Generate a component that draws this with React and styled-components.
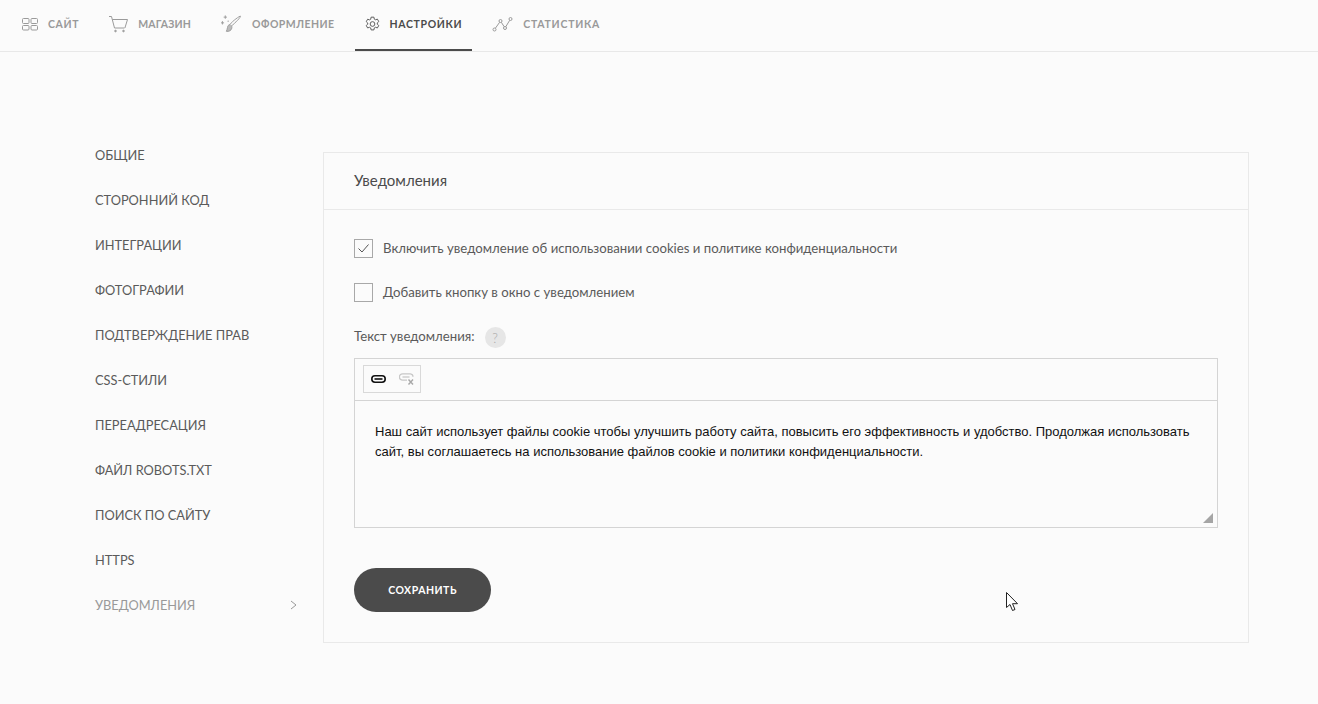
import React from 'react';
import styled, { createGlobalStyle } from 'styled-components';

const GlobalStyle = createGlobalStyle`
  html, body {
    margin: 0;
    padding: 0;
    background: #fbfbfb;
    font-family: 'Lato', 'Open Sans', 'Liberation Sans', sans-serif;
  }
  * {
    box-sizing: border-box;
  }
`;

const GridIcon = () => (
  <svg width="16" height="13" viewBox="0 0 16 13" fill="none" stroke="#9a9a9a" strokeWidth="1">
    <rect x="0.5" y="0.5" width="6.500" height="5" rx="1" />
    <rect x="9" y="0.5" width="6.500" height="5" rx="1" />
    <rect x="0.5" y="7.500" width="6.500" height="4.500" rx="1" />
    <rect x="9" y="7.500" width="6.500" height="4.500" rx="1" />
  </svg>
);

const CartIcon = () => (
  <svg width="19" height="17" viewBox="0 0 19 17" fill="none" stroke="#9a9a9a" strokeWidth="1">
    <path d="M0 0.5h2.5l3 11.5h10" />
    <path d="M3.4 3.5H18.5l-2.6 8.5" />
    <circle cx="6.5" cy="15" r="0.8" fill="#9a9a9a" />
    <circle cx="14.5" cy="15" r="0.8" fill="#9a9a9a" />
  </svg>
);

const BrushIcon = () => (
  <svg width="21" height="18" viewBox="0 0 22 18" fill="none" stroke="#9a9a9a" strokeWidth="1">
    <path d="M20.5 0.8c0.6 0.6-6 7.600-9.500 10.200l-1.600-1.600C12 6 19.800 0.200 20.500 0.800z" />
    <path d="M9.400 9.600c-2 0.400-2.400 1.600-2.600 3.200-0.200 1.600-0.800 2.800-1.200 3.900 2.400 0.400 5.200-0.800 5.700-3.300 0.200-1 0-2.200-0.300-2.400" fill="#bbb" />
    <path d="M4.500 0v3.500M2.800 1.800h3.400" />
    <path d="M1.500 6v3.500M0 7.800h3.200" />
    <circle cx="7.500" cy="6" r="0.700" fill="#9a9a9a" stroke="none" />
  </svg>
);

const GearIcon = () => (
  <svg width="15" height="16" viewBox="0 0 16 16" fill="none" stroke="#555" strokeWidth="1">
    <path d="M6.500 0.700h3l0.400 2.100 1.300 0.700 2-0.700 1.500 2.600-1.600 1.400v1.400l1.600 1.400-1.500 2.600-2-0.700-1.300 0.700-0.400 2.100h-3l-0.400-2.100-1.300-0.700-2 0.700-1.500-2.600 1.600-1.400V6.900L1.300 5.500l1.500-2.600 2 0.700 1.300-0.700z" />
    <circle cx="8" cy="8" r="2.500" />
  </svg>
);

const StatsIcon = () => (
  <svg width="21" height="15" viewBox="0 0 20 15" fill="none" stroke="#9a9a9a" strokeWidth="1">
    <circle cx="2" cy="12.500" r="1.500" />
    <circle cx="8" cy="4" r="1.500" />
    <circle cx="12.500" cy="11" r="1.500" />
    <circle cx="18" cy="2" r="1.500" />
    <path d="M2.900 11.200L7.100 5.300M8.800 5.300l2.900 4.400M13.300 9.700l3.900-6.400" />
  </svg>
);

const LinkIcon = () => (
  <svg width="15" height="8" viewBox="0 0 15 8" fill="none" stroke="#111" strokeWidth="1.600">
    <rect x="0.800" y="0.800" width="13.400" height="6.400" rx="3.200" />
    <path d="M3.500 4h8" />
  </svg>
);

const UnlinkIcon = () => (
  <svg width="15" height="12" viewBox="0 0 15 12" fill="none" stroke="#c8c8c8" strokeWidth="1.300">
    <path d="M8 7.200H3.600a3.200 3.200 0 0 1 0-6.400h7.800a3 3 0 0 1 2.600 3" />
    <path d="M3.500 4h7" />
    <path d="M9.500 6.500l4.500 5M14 6.500l-4.500 5" stroke="#a8a8a8" strokeWidth="1.400" />
  </svg>
);

const navTabs = [
  { label: 'Сайт', icon: <GridIcon />, spacing: 0.65 },
  { label: 'Магазин', icon: <CartIcon />, spacing: 0.2 },
  { label: 'Оформление', icon: <BrushIcon />, spacing: 0.45 },
  { label: 'Настройки', icon: <GearIcon />, spacing: 0.65, active: true },
  { label: 'Статистика', icon: <StatsIcon />, spacing: 0.75 },
];

const sideItems = [
  'Общие',
  'Сторонний код',
  'Интеграции',
  'Фотографии',
  'Подтверждение прав',
  'CSS-стили',
  'Переадресация',
  'Файл robots.txt',
  'Поиск по сайту',
  'HTTPS',
];

const App = () => {
  return (
    <Page>
      <GlobalStyle />
      <TopBar>
        {navTabs.map((tab) => (
          <NavTab key={tab.label} $active={tab.active} $spacing={tab.spacing}>
            {tab.icon}
            <span>{tab.label}</span>
          </NavTab>
        ))}
      </TopBar>
      <Content>
        <Sidebar>
          {sideItems.map((item) => (
            <SideItem key={item}>{item}</SideItem>
          ))}
          <SideItem $current>
            Уведомления
            <svg width="7" height="10" viewBox="0 0 7 10" fill="none" stroke="#999" strokeWidth="1">
              <path d="M1 1l5 4-5 4" />
            </svg>
          </SideItem>
        </Sidebar>
        <Panel>
          <PanelHeader>Уведомления</PanelHeader>
          <PanelBody>
            <CheckRow>
              <CheckBox>
                <svg width="11" height="9" viewBox="0 0 11 9" fill="none" stroke="#555" strokeWidth="1">
                  <path d="M0.500 4.500l3.500 3.500 6.500-7.500" />
                </svg>
              </CheckBox>
              <RowText>Включить уведомление об использовании cookies и политике конфиденциальности</RowText>
            </CheckRow>
            <CheckRow>
              <CheckBox />
              <RowText>Добавить кнопку в окно с уведомлением</RowText>
            </CheckRow>
            <FieldLabel>
              <LabelText>Текст уведомления:</LabelText>
              <HelpBadge>?</HelpBadge>
            </FieldLabel>
            <Editor>
              <EditorToolbar>
                <ToolGroup>
                  <LinkIcon />
                  <UnlinkIcon />
                </ToolGroup>
              </EditorToolbar>
              <EditorText>
                Наш сайт использует файлы cookie чтобы улучшить работу сайта, повысить его эффективность и удобство. Продолжая использовать сайт, вы соглашаетесь на использование файлов cookie и политики конфиденциальности.
                <ResizeGrip />
              </EditorText>
            </Editor>
            <SaveButton>Сохранить</SaveButton>
          </PanelBody>
        </Panel>
      </Content>
      <Cursor width="13" height="20" viewBox="0 0 13 20">
        <path d="M0.500 0.500v15l3.500-3 2.500 6 2.500-1-2.500-5.800h5z" fill="#fff" stroke="#222" strokeWidth="1" />
      </Cursor>
    </Page>
  );
};

const Page = styled.div`
  position: relative;
  width: 100%;
  height: 704px;
  overflow: hidden;
  background: #fbfbfb;
`;

const TopBar = styled.div`
  display: flex;
  gap: 10px;
  height: 52px;
  padding: 0 12px;
  border-bottom: 1px solid #e8e8e8;
`;

const NavTab = styled.div`
  display: flex;
  align-items: center;
  gap: 10px;
  height: 51px;
  padding: 0 10px 1px;
  border-bottom: 2px solid ${(p) => (p.$active ? '#4b4b4b' : 'transparent')};
  color: ${(p) => (p.$active ? '#4b4b4b' : '#999')};
  font-size: 10.500px;
  font-weight: 700;
  letter-spacing: ${(p) => p.$spacing}px;
  text-transform: uppercase;
`;

const Content = styled.div`
  display: flex;
  align-items: flex-start;
  padding: 80px 69px 0 95px;
`;

const Sidebar = styled.div`
  width: 228px;
  flex: none;
  padding-right: 26px;
`;

const SideItem = styled.div`
  display: flex;
  align-items: center;
  justify-content: space-between;
  height: 45px;
  color: ${(p) => (p.$current ? '#999' : '#5a5a5a')};
  font-size: 12.800px;
  text-transform: uppercase;
`;

const Panel = styled.div`
  flex: 1;
  height: 491px;
  margin-top: 20px;
  border: 1px solid #e9e9e9;
`;

const PanelHeader = styled.div`
  height: 57px;
  padding: 0 30px 2px;
  display: flex;
  align-items: center;
  border-bottom: 1px solid #e9e9e9;
  color: #4b4b4b;
  font-size: 15px;
`;

const PanelBody = styled.div`
  padding: 29px 30px 0;
`;

const CheckRow = styled.div`
  display: flex;
  align-items: center;
  gap: 10px;
  height: 19px;
  margin-bottom: 25px;
  color: #5a5a5a;
  font-size: 13.200px;
`;

const RowText = styled.span`
  margin-bottom: 2px;
`;

const CheckBox = styled.div`
  display: flex;
  align-items: center;
  justify-content: center;
  width: 19px;
  height: 19px;
  border: 1px solid #a8a8a8;
`;

const FieldLabel = styled.div`
  display: flex;
  align-items: center;
  gap: 10px;
  height: 21px;
  margin-bottom: 10px;
  color: #5a5a5a;
  font-size: 13.200px;
`;

const LabelText = styled.span`
  margin-bottom: 3px;
`;

const HelpBadge = styled.span`
  display: flex;
  align-items: center;
  justify-content: center;
  width: 21px;
  height: 21px;
  border-radius: 50%;
  background: #e6e6e6;
  color: #aaa;
  font-size: 13px;
  font-weight: 300;
`;

const Editor = styled.div`
  width: 864px;
  height: 170px;
  border: 1px solid #d4d4d4;
`;

const EditorToolbar = styled.div`
  height: 42px;
  padding: 6px 8px;
  border-bottom: 1px solid #d4d4d4;
`;

const ToolGroup = styled.div`
  display: flex;
  align-items: center;
  gap: 13px;
  width: 58px;
  height: 28px;
  padding-left: 7px;
  border: 1px solid #d9d9d9;
`;

const EditorText = styled.div`
  position: relative;
  height: 126px;
  padding: 21px 20px 0;
  color: #111;
  font-family: 'Liberation Sans', Arial, sans-serif;
  font-size: 13px;
  line-height: 20px;
`;

const ResizeGrip = styled.span`
  position: absolute;
  right: 4px;
  bottom: 4px;
  width: 10px;
  height: 10px;
  background: #a5a5a5;
  clip-path: polygon(100% 0, 100% 100%, 0 100%);
`;

const SaveButton = styled.button`
  display: block;
  width: 137px;
  height: 44px;
  margin-top: 40px;
  border: 0;
  border-radius: 22px;
  background: #4b4b4b;
  color: #fff;
  font-family: inherit;
  font-size: 10.500px;
  font-weight: 700;
  letter-spacing: 0.500px;
  text-transform: uppercase;
`;

const Cursor = styled.svg`
  position: absolute;
  left: 1006px;
  top: 592px;
`;

export default App;
